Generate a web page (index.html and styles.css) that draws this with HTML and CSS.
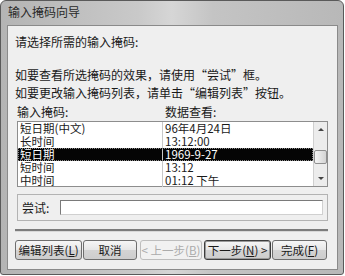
FILE: index.html
```html
<!DOCTYPE html>
<html lang="zh-CN">
<head>
    <meta charset="UTF-8">
    <title>输入掩码向导</title>
    <link rel="stylesheet" href="styles.css">
</head>
<body>

    <div class="window">
        <div class="titlebar">输入掩码向导</div>

        <div class="panel">
            <p class="prompt">请选择所需的输入掩码:</p>

            <div class="hints">
                <p>如要查看所选掩码的效果，请使用“尝试”框。</p>
                <p>如要更改输入掩码列表，请单击“编辑列表”按钮。</p>
            </div>

            <div class="labels">
                <span class="col-a">输入掩码:</span>
                <span class="col-b">数据查看:</span>
            </div>

            <div class="listbox">
                <div class="rows">
                    <div class="row"><span class="col-a">短日期(中文)</span><span class="col-b">96年4月24日</span></div>
                    <div class="row"><span class="col-a">长时间</span><span class="col-b">13:12:00</span></div>
                    <div class="row selected"><span class="col-a">短日期</span><span class="col-b">1969-9-27</span></div>
                    <div class="row"><span class="col-a">短时间</span><span class="col-b">13:12</span></div>
                    <div class="row"><span class="col-a">中时间</span><span class="col-b">01:12 下午</span></div>
                </div>
                <div class="scrollbar">
                    <span class="arrow up"></span>
                    <span class="thumb"></span>
                    <span class="arrow down"></span>
                </div>
            </div>

            <div class="try-group">
                <span class="try-label">尝试:</span>
                <div class="try-input"></div>
            </div>

            <div class="separator"></div>

            <div class="buttons">
                <button class="btn btn-edit">编辑列表(<u>L</u>)</button>
                <button class="btn btn-cancel">取消</button>
                <button class="btn btn-back" disabled>&lt; 上一步(<u>B</u>)</button>
                <button class="btn btn-next default">下一步(<u>N</u>) &gt;</button>
                <button class="btn btn-finish">完成(<u>F</u>)</button>
            </div>
        </div>
    </div>

</body>
</html>
```

FILE: styles.css
```css
* {
    margin: 0;
    padding: 0;
    box-sizing: border-box;
    font-family: "Noto Sans CJK SC", "Liberation Sans", sans-serif;
}

body {
    width: 345px;
    height: 276px;
    background: #ffffff;
    overflow: hidden;
}

.window {
    width: 344px;
    height: 275px;
    border: 1px solid #5a5a5a;
    border-radius: 6px 6px 3px 3px;
    background: linear-gradient(to right, #b4b4b4, #c9c9c9 40%, #d6d6d6 50%, #c4c4c4 62%, #b8b8b8);
    display: flex;
    flex-direction: column;
    padding: 0 5px 4px 6px;
}

.titlebar {
    height: 24px;
    line-height: 22px;
    font-size: 12px;
    color: #2a2a2a;
    padding-left: 1px;
}

.panel {
    flex: 1;
    background: #efefef;
    border: 1px solid #8a8a8a;
    padding: 7px 9px 0 7px;
    font-size: 12px;
    color: #1a1a1a;
}

.prompt {
    line-height: 18px;
}

.hints {
    margin-top: 15px;
    line-height: 18px;
}

.labels {
    display: flex;
    height: 18px;
    line-height: 18px;
    margin-top: 1px;
    padding-left: 2px;
}

.labels .col-a {
    width: 148px;
}

.listbox {
    display: flex;
    height: 66px;
    margin-left: 2px;
    border: 1px solid #8d8d8d;
    background: #ffffff;
}

.rows {
    flex: 1;
    display: flex;
    flex-direction: column;
}

.row {
    display: flex;
    height: 13px;
    line-height: 13px;
    font-size: 11.5px;
    white-space: nowrap;
}

.row .col-a {
    width: 145px;
    padding-left: 2px;
    border-right: 1px solid #c8c8c8;
}

.row .col-b {
    padding-left: 2px;
}

.row.selected {
    background: #050505;
    color: #ffffff;
    outline: 1px dotted #888;
    outline-offset: -1px;
}

.scrollbar {
    width: 14px;
    border-left: 1px solid #cfcfcf;
    background: #ececec;
    position: relative;
}

.arrow {
    position: absolute;
    left: 4px;
    width: 0;
    height: 0;
    border-left: 3px solid transparent;
    border-right: 3px solid transparent;
}

.arrow.up {
    top: 6px;
    border-bottom: 3px solid #444;
}

.arrow.down {
    bottom: 6px;
    border-top: 3px solid #444;
}

.thumb {
    position: absolute;
    left: 0;
    top: 28px;
    width: 13px;
    height: 14px;
    border: 1px solid #8f8f8f;
    border-radius: 2px;
    background: linear-gradient(to right, #f4f4f4, #d4d4d4);
}

.try-group {
    display: flex;
    align-items: center;
    height: 27px;
    margin-top: 7px;
    margin-left: 2px;
    border: 1px solid #b3b3b3;
    padding: 0 4px 0 4px;
}

.try-label {
    width: 38px;
}

.try-input {
    flex: 1;
    height: 15px;
    background: #ffffff;
    border: 1px solid #7a7a7a;
    border-right-color: #d0d0d0;
    border-bottom-color: #d0d0d0;
}

.separator {
    margin-top: 8px;
    height: 3px;
    background: #7c7c7c;
    border-bottom: 1px solid #d8d8d8;
}

.buttons {
    display: flex;
    margin-top: 8px;
}

.btn {
    height: 20px;
    padding: 0;
    font-size: 11.5px;
    white-space: nowrap;
    color: #1a1a1a;
    border: 1px solid #6e6e6e;
    border-radius: 3px;
    background: linear-gradient(to bottom, #f6f6f6, #e6e6e6 50%, #d4d4d4 51%, #cdcdcd);
    line-height: 17px;
}

.btn u {
    text-decoration: underline;
}

.btn-edit {
    width: 67px;
}

.btn-cancel {
    width: 54px;
    margin-left: 1px;
}

.btn-back {
    width: 62px;
    margin-left: 3px;
    color: #ababab;
    border-color: #bdbdbd;
    background: #f1f1f1;
}

.btn-next {
    width: 67px;
    margin-left: 2px;
}

.default {
    border-color: #3c3c3c;
    box-shadow: inset 0 0 0 1px #9a9a9a;
}

.btn-finish {
    width: 55px;
    margin-left: 1px;
}
```
